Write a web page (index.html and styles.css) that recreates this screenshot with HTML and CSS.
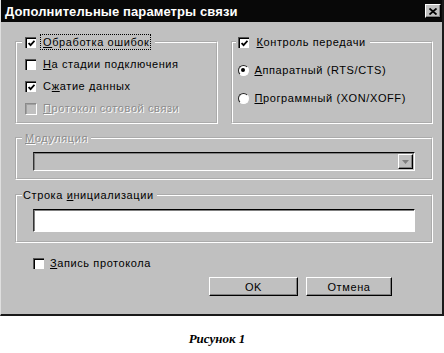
FILE: index.html
```html
<!DOCTYPE html>
<html lang="ru">
<head>
<meta charset="utf-8">
<title>Дополнительные параметры связи</title>
<link rel="stylesheet" href="styles.css">
</head>
<body>
<div class="dialog">
  <div class="titlebar">
    <span class="title">Дополнительные параметры связи</span>
    <span class="close"><svg width="8" height="7" viewBox="0 0 8 7"><path d="M0.5 0.5 L7.5 6.5 M7.5 0.5 L0.5 6.5" stroke="#000" stroke-width="1.8" fill="none"/></svg></span>
  </div>
  <div class="body">
    <div class="toprow">
      <fieldset class="group g1">
        <legend class="lg1"><span class="cb"><svg width="7" height="7" viewBox="0 0 7 7"><path d="M0.6 3 L2.6 5.2 L6.5 0.8" stroke="#000" stroke-width="1.8" fill="none"/></svg></span><span class="focus"><u>О</u>бработка ошибок</span></legend>
        <div class="opt"><span class="cb"></span><span><u>Н</u>а стадии подключения</span></div>
        <div class="opt"><span class="cb"><svg width="7" height="7" viewBox="0 0 7 7"><path d="M0.6 3 L2.6 5.2 L6.5 0.8" stroke="#000" stroke-width="1.8" fill="none"/></svg></span><span>С<u>ж</u>атие данных</span></div>
        <div class="opt dis"><span class="cb cb-dis"></span><span><u>П</u>ротокол сотовой связи</span></div>
      </fieldset>
      <fieldset class="group g2">
        <legend class="lg2"><span class="cb"><svg width="7" height="7" viewBox="0 0 7 7"><path d="M0.6 3 L2.6 5.2 L6.5 0.8" stroke="#000" stroke-width="1.8" fill="none"/></svg></span><span class="lt"><u>К</u>онтроль передачи</span></legend>
        <div class="opt ropt"><span class="rb"><span class="dot"></span></span><span><u>А</u>ппаратный (RTS/CTS)</span></div>
        <div class="opt ropt"><span class="rb"></span><span><u>П</u>рограммный (XON/XOFF)</span></div>
      </fieldset>
    </div>
    <fieldset class="group g3">
      <legend class="lg3 dis"><span><u>М</u>одуляция</span></legend>
      <div class="combo">
        <span class="combo-btn"><svg width="7" height="4" viewBox="0 0 7 4"><path d="M0 0 H7 L3.5 4 Z" fill="#808080"/></svg></span>
      </div>
    </fieldset>
    <fieldset class="group g4">
      <legend class="lg4"><span>Строка <u>и</u>нициализации</span></legend>
      <div class="field"></div>
    </fieldset>
    <div class="logrow"><span class="cb"></span><span><u>З</u>апись протокола</span></div>
    <div class="buttons">
      <span class="btn btn-ok">OK</span>
      <span class="btn btn-cancel">Отмена</span>
    </div>
  </div>
</div>
<div class="caption">Рисунок 1</div>
</body>
</html>
```

FILE: styles.css
```css
* { box-sizing: border-box; }
html, body { margin: 0; padding: 0; background: #fff; }
body {
  width: 444px;
  height: 353px;
  overflow: hidden;
  font-family: "Liberation Sans", Arial, sans-serif;
  font-size: 11px;
  color: #000;
}
u { text-decoration: underline; text-underline-offset: 1px; }

.dialog {
  width: 444px;
  height: 316px;
  background: #c0c0c0;
  border-left: 1px solid #dfdfdf;
  border-right: 2px solid #1a1a1a;
  border-bottom: 2px solid #1a1a1a;
  display: flex;
  flex-direction: column;
}

.titlebar {
  height: 22px;
  background: #080808;
  display: flex;
  align-items: center;
  justify-content: space-between;
  padding: 0 1px 0 4px;
}
.title {
  color: #fff;
  font-weight: bold;
  font-size: 13px;
  letter-spacing: 0.1px;
}
.close {
  width: 16px;
  height: 14px;
  background: #c0c0c0;
  border: 1px solid;
  border-color: #fff #000 #000 #fff;
  box-shadow: inset -1px -1px #808080;
  display: flex;
  align-items: center;
  justify-content: center;
}

.body {
  padding: 12px 9px 0 14px;
  display: flex;
  flex-direction: column;
  letter-spacing: 0.6px;
}

.toprow {
  display: grid;
  grid-template-columns: 1fr 1fr;
  column-gap: 13px;
  height: 90px;
}

.group {
  margin: 0;
  min-width: 0;
  border: 2px groove #fff;
}
legend {
  line-height: 16px;
  display: flex;
  align-items: center;
}

.g1 { padding: 3px 4px 3px 5px; }
.lg1 { padding: 0 4px 0 3px; }
.g2 { padding: 6px 4px 6px 3px; }
.lg2 { padding: 0 4px 0 2px; }

.focus {
  margin-left: 4px;
  padding: 0 1px 0 2px;
  border: 1px dotted #000;
  line-height: 14px;
}
.lt { margin-left: 8px; }

.opt {
  height: 22px;
  display: flex;
  align-items: center;
  gap: 7px;
  padding-left: 3px;
}
.ropt { height: 28px; gap: 6px; padding-left: 2px; }

.cb {
  width: 11px;
  height: 11px;
  flex: none;
  background: #fff;
  border-top: 1px solid #555;
  border-left: 1px solid #555;
  box-shadow: inset 1px 1px #000;
  display: flex;
  align-items: center;
  justify-content: center;
  padding: 1px 0 0 1px;
}
.cb-dis {
  background: #c0c0c0;
  border-top-color: #8a8a8a;
  border-left-color: #8a8a8a;
  box-shadow: inset 1px 1px #a0a0a0, 1px 1px #fff;
}
.rb {
  width: 11px;
  height: 11px;
  flex: none;
  border-radius: 50%;
  background: #fff;
  border: 1px solid;
  border-color: #222 #fff #fff #222;
  display: flex;
  align-items: center;
  justify-content: center;
}
.dot {
  width: 4px;
  height: 4px;
  border-radius: 50%;
  background: #000;
}

.dis { color: #8c8c8c; text-shadow: 1px 1px 0 #fff; }

.g3 {
  margin-top: 6px;
  padding: 6px 16px 7px 5px;
  height: 50px;
}
.lg3 { padding: 0 3px 0 3px; }
.combo {
  margin-left: 11px;
  height: 19px;
  background: #c0c0c0;
  border-top: 1px solid #000;
  border-left: 1px solid #333;
  border-bottom: 1px solid #fff;
  border-right: 1px solid #fff;
  box-shadow: inset 1px 1px #808080;
  display: flex;
  justify-content: flex-end;
  align-items: center;
  padding-right: 1px;
}
.combo-btn {
  width: 15px;
  height: 15px;
  background: #c0c0c0;
  border: 1px solid;
  border-color: #fff #000 #000 #fff;
  box-shadow: inset -1px -1px #808080;
  display: flex;
  align-items: center;
  justify-content: center;
}

.g4 {
  margin-top: 7px;
  padding: 6px 16px 9px 5px;
  height: 56px;
}
.lg4 { padding: 0 3px 0 1px; }
.field {
  margin-left: 11px;
  height: 23px;
  background: #fff;
  border-top: 1px solid #000;
  border-left: 1px solid #333;
  border-bottom: 1px solid #fff;
  border-right: 1px solid #fff;
  box-shadow: inset 1px 1px #808080;
}

.logrow {
  margin-top: 12px;
  margin-left: 18px;
  height: 16px;
  display: flex;
  align-items: center;
  gap: 6px;
}

.buttons {
  margin-top: 6px;
  display: flex;
  justify-content: flex-end;
  gap: 8px;
  padding-right: 41px;
}
.btn {
  height: 19px;
  background: #c0c0c0;
  border: 1px solid;
  border-color: #fff #000 #000 #fff;
  box-shadow: inset -1px -1px #808080;
  display: flex;
  align-items: center;
  justify-content: center;
  padding-top: 1px;
}
.btn-ok { width: 89px; }
.btn-cancel { width: 86px; }

.caption {
  margin-top: 15px;
  padding-right: 10px;
  text-align: center;
  font-family: "Liberation Serif", "Times New Roman", serif;
  font-weight: bold;
  font-style: italic;
  font-size: 13px;
  line-height: 16px;
}
```
